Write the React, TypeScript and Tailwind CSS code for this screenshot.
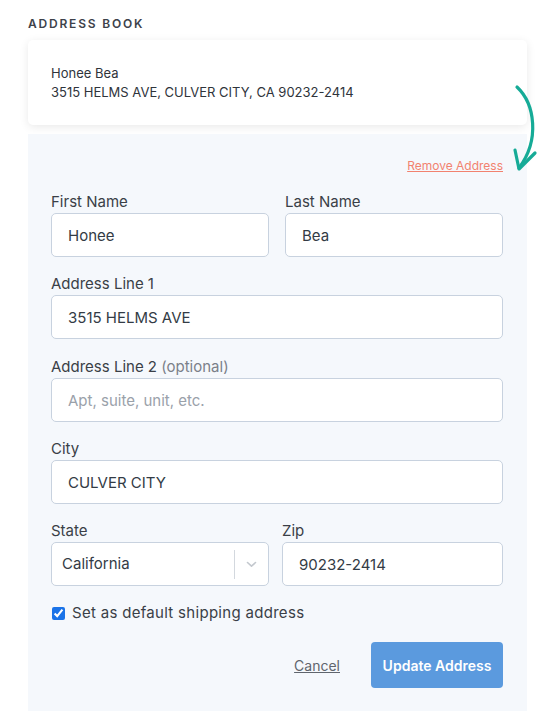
import React, { useState } from 'react';

const inputCls =
  'block w-full h-[44px] rounded-[5px] border border-[#c8d2df] bg-white px-4 text-[15px] text-[#333b45] placeholder:text-[#9aa1aa] outline-none';

const Label = ({ children }: { children: React.ReactNode }) => (
  <label className="block text-[15px] leading-5 text-[#3a3f47] mb-px">{children}</label>
);

export default function App() {
  const [isDefault, setIsDefault] = useState(true);

  return (
    <div className="relative min-h-[724px] bg-white font-['Inter','Liberation_Sans',sans-serif]">
      <div className="pt-4 pl-[28px]">
        <h2 className="text-[12px] leading-4 font-semibold tracking-[0.15em] text-[#3d424a]">ADDRESS BOOK</h2>
      </div>

      <div className="ml-[28px] w-[499px] mt-[8px]">
        <div className="rounded-[5px] bg-white px-[23px] pt-[24px] pb-[23px] shadow-[0_2px_10px_rgba(0,0,0,0.09)]">
          <p className="text-[13px] leading-[19px] text-[#2f343b]">Honee Bea</p>
          <p className="text-[13px] leading-[19px] text-[#2f343b]">3515 HELMS AVE, CULVER CITY, CA 90232-2414</p>
        </div>

        <div className="mt-[9px] bg-[#f5f8fc] pl-[23px] pr-[24px] pt-6 pb-[23px]">
          <div className="flex justify-end">
            <a href="#" className="text-[12px] leading-4 text-[#f2826f] underline">
              Remove Address
            </a>
          </div>

          <div className="mt-[18px] grid grid-cols-2 gap-x-4">
            <div>
              <Label>First Name</Label>
              <input className={inputCls} defaultValue="Honee" />
            </div>
            <div>
              <Label>Last Name</Label>
              <input className={inputCls} defaultValue="Bea" />
            </div>
          </div>

          <div className="mt-[17px]">
            <Label>Address Line 1</Label>
            <input className={inputCls} defaultValue="3515 HELMS AVE" />
          </div>

          <div className="mt-[18px]">
            <Label>
              Address Line 2 <span className="text-[#7b8089]">(optional)</span>
            </Label>
            <input className={inputCls} placeholder="Apt, suite, unit, etc." />
          </div>

          <div className="mt-[17px]">
            <Label>City</Label>
            <input className={inputCls} defaultValue="CULVER CITY" />
          </div>

          <div className="mt-[17px] flex gap-[13px]">
            <div className="w-[218px]">
              <Label>State</Label>
              <div className="flex h-[44px] items-center rounded-[5px] border border-[#c8d2df] bg-white">
                <span className="flex-1 pl-[10px] text-[15px] text-[#333b45]">California</span>
                <span className="h-[29px] w-px bg-[#d3d8de]" />
                <span className="flex w-[33px] justify-center">
                  <svg width="11" height="7" viewBox="0 0 11 7" fill="none" stroke="#c3c8ce" strokeWidth="1.6" strokeLinecap="round" strokeLinejoin="round">
                    <path d="M1.5 1.5 L5.5 5.2 L9.5 1.5" />
                  </svg>
                </span>
              </div>
            </div>
            <div className="flex-1">
              <Label>Zip</Label>
              <input className={inputCls} defaultValue="90232-2414" />
            </div>
          </div>

          <label className="mt-[17px] flex items-center gap-[7px] text-[15px] leading-5 tracking-[0.02em] text-[#3a3f47]">
            <input
              type="checkbox"
              checked={isDefault}
              onChange={(e) => setIsDefault(e.target.checked)}
              className="ml-px h-[13px] w-[13px] accent-[#1a73e8]"
            />
            Set as default shipping address
          </label>

          <div className="mt-[19px] flex items-center justify-end gap-[31px]">
            <button className="text-[14px] text-[#5f656d] underline">Cancel</button>
            <button className="h-[46px] w-[132px] rounded-[4px] bg-[#5b9ade] text-[14px] font-semibold text-white">
              Update Address
            </button>
          </div>
        </div>
      </div>

      {/* teal hint arrow */}
      <svg
        className="absolute left-[505px] top-[80px]"
        width="41"
        height="100"
        viewBox="0 0 41 100"
        fill="none"
        stroke="#16ab97"
        strokeWidth="3.2"
        strokeLinecap="round"
        strokeLinejoin="round"
      >
        <path d="M12 7 C 30 24, 35 60, 14 88" />
        <path d="M10 70 L 14 89 L 30 73" />
      </svg>
    </div>
  );
}
